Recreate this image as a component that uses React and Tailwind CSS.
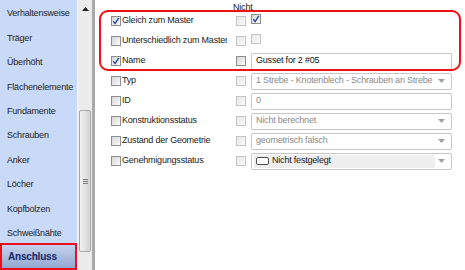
import React from "react";

const font = { fontFamily: '"Liberation Sans", Arial, sans-serif' };

function Check({ checked, disabled }) {
  return (
    <span
      className={
        "relative inline-flex h-[10px] w-[10px] shrink-0 items-center justify-center border " +
        (disabled
          ? "border-[#c4c4c4] bg-gradient-to-br from-[#e8e8e8] to-[#fafafa]"
          : "border-[#8c8e90] bg-gradient-to-br from-[#d6d6d6] to-[#fbfbfb]")
      }
    >
      {checked && (
        <svg width="8" height="8" viewBox="0 0 8 8" className="absolute">
          <path d="M1.3 4.2 L3.1 6.6 L6.8 0.8" fill="none" stroke="#21409a" strokeWidth="1.3" />
        </svg>
      )}
    </span>
  );
}

function Arrow() {
  return (
    <svg width="7" height="4" viewBox="0 0 7 4" className="mr-[6px] shrink-0">
      <path d="M0 0 L7 0 L3.5 4 Z" fill="#a0a0a0" />
    </svg>
  );
}

function Field({ kind, text, dark, status }) {
  return (
    <div className="ml-[5px] flex h-[17px] w-[201px] items-center rounded-[2px] border border-[#c6c6c6] bg-white">
      {status ? (
        <div className="ml-[2px] flex h-[13px] w-[181px] items-center bg-[#eeeeee]">
          <span className="ml-[2px] h-[8px] w-[13px] rounded-[2px] border border-[#505050] bg-white" />
          <span className="ml-[3px] text-[#222]">{text}</span>
        </div>
      ) : (
        <span className={"ml-[4px] flex-1 truncate " + (dark ? "text-[#111]" : "text-[#8a8a8a]")}>{text}</span>
      )}
      {kind === "select" && <span className="ml-auto flex items-center"><Arrow /></span>}
    </div>
  );
}

function Row({ label, checked, children }) {
  return (
    <div className="flex h-[20px] items-center">
      <div className="ml-[111px] mr-[9px] flex w-[116px] items-center overflow-hidden whitespace-nowrap">
        <Check checked={checked} />
        <span className="ml-[1px] text-[#1a1a1a]">{label}</span>
      </div>
      {children}
    </div>
  );
}

const items = [
  "Verhaltensweise",
  "Träger",
  "Überhöht",
  "Flächenelemente",
  "Fundamente",
  "Schrauben",
  "Anker",
  "Löcher",
  "Kopfbolzen",
  "Schweißnähte",
];

export default function App() {
  return (
    <div className="relative flex h-[270px] w-[465px] overflow-hidden bg-white text-[9px] tracking-[-0.2px]" style={font}>
      {/* sidebar */}
      <div className="flex w-[77px] shrink-0 flex-col bg-[#c9d9f8] pt-[2px]">
        {items.map((t) => (
          <div key={t} className="flex h-[24.4px] items-center pl-[7px] text-[#1d1d1d]">
            {t}
          </div>
        ))}
        <div className="mt-[-3px] flex h-[27px] items-center border-2 border-[#e8101a] bg-gradient-to-b from-[#c4d2ee] to-[#93a8cf] pl-[6px] text-[10px] font-bold text-[#15286a]">
          Anschluss
        </div>
      </div>
      {/* scrollbar */}
      <div className="flex w-[15px] shrink-0 flex-col border-l border-[#f6f6f6] bg-[#ececec]">
        <div className="flex h-[18px] items-center justify-center">
          <svg width="7" height="4" viewBox="0 0 7 4">
            <path d="M0 4 L7 4 L3.5 0 Z" fill="#222" />
          </svg>
        </div>
        <div className="mt-[92px] ml-[1px] flex h-[142px] w-[12px] items-center justify-center rounded-[2px] border border-[#a7a7a7] bg-gradient-to-r from-[#f2f2f2] to-[#d4d4d4]">
          <div className="flex flex-col gap-[1px]">
            <span className="h-px w-[5px] bg-[#7a7a7a]" />
            <span className="h-px w-[5px] bg-[#7a7a7a]" />
            <span className="h-px w-[5px] bg-[#7a7a7a]" />
          </div>
        </div>
      </div>
      <div className="w-[3px] shrink-0 bg-[#a9a9a9]" />
      {/* content */}
      <div className="relative flex-1">
        <div className="absolute left-[138px] top-[1px] text-[#222]">Nicht</div>
        <div className="absolute -left-[95px] top-0 pt-[11px] w-[465px]">
          <Row label="Gleich zum Master" checked>
            <Check disabled />
            <span className="ml-[5px]"><Check checked /></span>
          </Row>
          <Row label="Unterschiedlich zum Master">
            <Check disabled />
            <span className="ml-[5px]"><Check disabled /></span>
          </Row>
          <Row label="Name" checked>
            <Check />
            <Field text="Gusset for 2 #05" dark />
          </Row>
          <Row label="Typ">
            <Check disabled />
            <Field kind="select" text="1 Strebe  -  Knotenblech - Schrauben an Strebe" />
          </Row>
          <Row label="ID">
            <Check disabled />
            <Field text="0" />
          </Row>
          <Row label="Konstruktionsstatus">
            <Check disabled />
            <Field kind="select" text="Nicht berechnet" />
          </Row>
          <Row label="Zustand der Geometrie">
            <Check disabled />
            <Field kind="select" text="geometrisch falsch" />
          </Row>
          <Row label="Genehmigungsstatus">
            <Check disabled />
            <Field kind="select" text="Nicht festgelegt" status />
          </Row>
        </div>
      </div>
      {/* highlight */}
      <div className="pointer-events-none absolute left-[99px] top-[10px] h-[61px] w-[362px] rounded-[9px] border-2 border-[#ee1111]" />
    </div>
  );
}
